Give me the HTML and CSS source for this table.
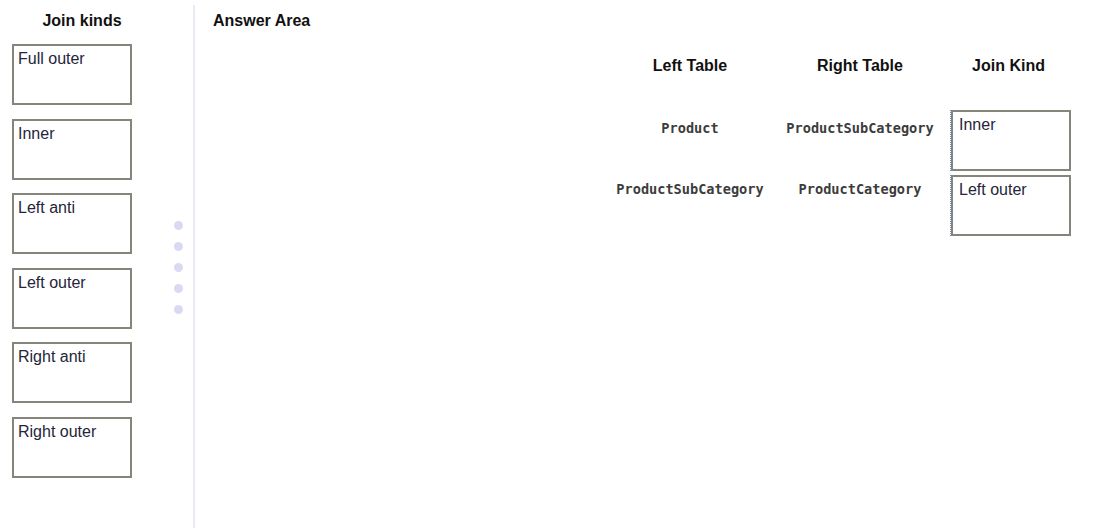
FILE: index.html
```html
<!DOCTYPE html>
<html lang="en">
<head>
  <meta charset="UTF-8">
  <title>Join kinds</title>
  <link rel="stylesheet" href="styles.css">
</head>
<body>

  <!-- Source list -->
  <div class="source">
    <div class="source-title">Join kinds</div>
    <div class="source-body">
      <div class="options">
        <div class="option">Full outer</div>
        <div class="option">Inner</div>
        <div class="option">Left anti</div>
        <div class="option">Left outer</div>
        <div class="option">Right anti</div>
        <div class="option">Right outer</div>
      </div>
      <div class="grip">
        <span></span><span></span><span></span><span></span><span></span>
      </div>
    </div>
  </div>

  <!-- Answer area -->
  <div class="answer">
    <div class="answer-title">Answer Area</div>
    <div class="answer-body">
      <div class="answer-table">
        <div class="col-head">Left Table</div>
        <div class="col-head">Right Table</div>
        <div class="col-head col-kind">Join Kind</div>

        <div class="cell cell-first">Product</div>
        <div class="cell cell-first">ProductSubCategory</div>
        <div class="slot-wrap"><div class="option">Inner</div></div>

        <div class="cell">ProductSubCategory</div>
        <div class="cell">ProductCategory</div>
        <div class="slot-wrap"><div class="option">Left outer</div></div>
      </div>
    </div>
  </div>

</body>
</html>
```

FILE: styles.css
```css
* {
  box-sizing: border-box;
  margin: 0;
  padding: 0;
}

body {
  font-family: 'Liberation Sans', Arial, sans-serif;
  background: #fff;
  color: #222;
  height: 100vh;
  display: flex;
  padding: 5px 0 4px 0;
}

.source {
  width: 195px;
  border-right: 2px solid #e8ebf2;
  padding: 5px 0 0 12px;
}

.source-title {
  width: 140px;
  text-align: center;
  font-weight: bold;
  font-size: 16px;
  line-height: 22px;
  color: #111;
}

.source-body {
  display: flex;
  margin-top: 12px;
}

.options {
  display: flex;
  flex-direction: column;
  gap: 13.6px;
}

.option {
  width: 120px;
  height: 61px;
  border: 2px solid #85857c;
  padding: 3px 0 0 4px;
  font-size: 16px;
  line-height: 20px;
  color: #25253a;
  background: #fff;
}

.grip {
  display: flex;
  flex-direction: column;
  gap: 12px;
  align-self: center;
  margin-left: 42px;
  padding-top: 13px;
}

.grip span {
  display: block;
  width: 9px;
  height: 9px;
  border-radius: 50%;
  background: #d9d9f4;
}

.answer {
  flex: 1;
  padding: 5px 22px 0 18px;
}

.answer-title {
  font-weight: bold;
  font-size: 16px;
  line-height: 22px;
  color: #111;
}

.answer-body {
  display: flex;
  justify-content: flex-end;
  margin-top: 24px;
}

.answer-table {
  display: grid;
  grid-template-columns: 170px 170px 126px;
  grid-template-rows: 49px 60px 60px;
  row-gap: 5px;
}

.col-head {
  text-align: center;
  font-weight: bold;
  font-size: 16px;
  line-height: 20px;
  color: #111;
}

.col-kind {
  padding-left: 1px;
}

.cell {
  text-align: center;
  font-family: 'DejaVu Sans Mono', monospace;
  font-weight: bold;
  font-size: 13.6px;
  line-height: 18px;
  color: #3c3c3c;
  padding-top: 5px;
}

.cell-first {
  padding-top: 9px;
}

.slot-wrap {
  margin-left: 5px;
  height: 61px;
  border-left: 1px dotted #6f8fd0;
}

.slot-wrap .option {
  padding-left: 6px;
}
```
